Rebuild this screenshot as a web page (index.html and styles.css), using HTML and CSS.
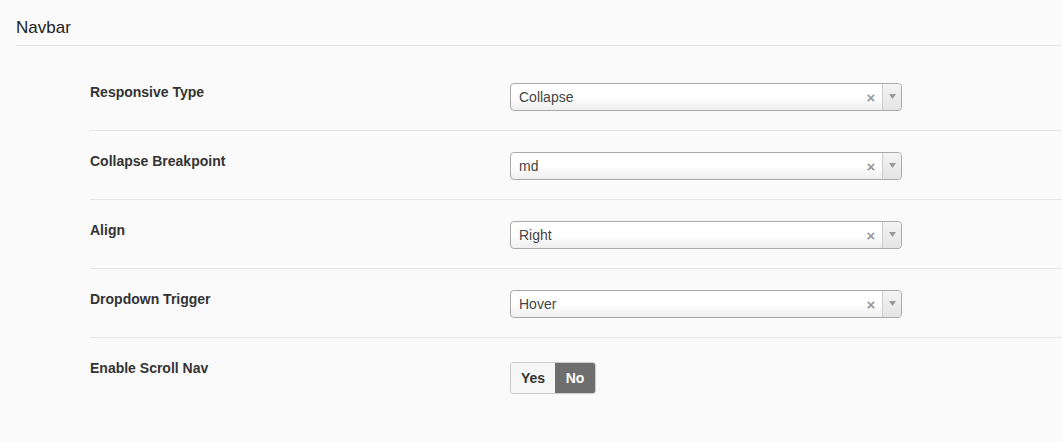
FILE: index.html
```html
<!DOCTYPE html>
<html>
<head>
<meta charset="utf-8">
<link rel="stylesheet" href="styles.css">
</head>
<body>
<div class="panel">
  <div class="panel-header">Navbar</div>
  <div class="panel-body">
    <div class="row">
      <div class="label">Responsive Type</div>
      <div class="select"><span class="value">Collapse</span><span class="clear">×</span><span class="arrow"><svg width="7" height="5" viewBox="0 0 7 5"><path d="M0 0h7L3.5 5z" fill="#999"/></svg></span></div>
    </div>
    <div class="row">
      <div class="label">Collapse Breakpoint</div>
      <div class="select"><span class="value">md</span><span class="clear">×</span><span class="arrow"><svg width="7" height="5" viewBox="0 0 7 5"><path d="M0 0h7L3.5 5z" fill="#999"/></svg></span></div>
    </div>
    <div class="row">
      <div class="label">Align</div>
      <div class="select"><span class="value">Right</span><span class="clear">×</span><span class="arrow"><svg width="7" height="5" viewBox="0 0 7 5"><path d="M0 0h7L3.5 5z" fill="#999"/></svg></span></div>
    </div>
    <div class="row">
      <div class="label">Dropdown Trigger</div>
      <div class="select"><span class="value">Hover</span><span class="clear">×</span><span class="arrow"><svg width="7" height="5" viewBox="0 0 7 5"><path d="M0 0h7L3.5 5z" fill="#999"/></svg></span></div>
    </div>
    <div class="row row-last">
      <div class="label">Enable Scroll Nav</div>
      <div class="toggle"><span class="opt opt-yes">Yes</span><span class="opt opt-no">No</span></div>
    </div>
  </div>
</div>
</body>
</html>
```
FILE: styles.css
```css
html, body {
  margin: 0;
  padding: 0;
  background: #fafafa;
  font-family: "Liberation Sans", Arial, sans-serif;
  color: #333;
}
.panel-header {
  margin-left: 16px;
  padding: 16px 0 5px;
  line-height: 24px;
  font-size: 17px;
  color: #222;
  border-bottom: 1px solid #e6e6e6;
}
.panel-body {
  padding-top: 16px;
  margin-left: 90px;
}
.row {
  display: flex;
  align-items: flex-start;
  padding: 20px 0 19px;
  border-bottom: 1px solid #e6e6e6;
}
.row-last {
  border-bottom: none;
  padding-top: 24px;
}
.label {
  width: 420px;
  flex: none;
  font-size: 14px;
  font-weight: bold;
  line-height: 20px;
  color: #333;
}
.row-last .label {
  margin-top: -4px;
}
.select {
  margin-top: 1px;
  width: 390px;
  height: 26px;
  border: 1px solid #aaa;
  border-radius: 4px;
  background: linear-gradient(to bottom, #ffffff 0%, #ffffff 50%, #eeeeee 100%);
  display: flex;
  align-items: center;
  font-size: 14px;
  line-height: 26px;
  color: #444;
}
.value {
  flex: 1;
  padding-left: 8px;
}
.clear {
  width: 14px;
  text-align: center;
  font-size: 15px;
  font-weight: bold;
  color: #999;
  margin-right: 4px;
  margin-top: 2px;
}
.arrow {
  width: 18px;
  height: 26px;
  border-left: 1px solid #ccc;
  border-radius: 0 4px 4px 0;
  background: linear-gradient(to bottom, #f4f4f4 0%, #e4e4e4 100%);
  display: flex;
  align-items: center;
  justify-content: center;
}
.arrow svg {
  display: block;
  margin-top: -2px;
}
.toggle {
  display: flex;
  height: 30px;
  border: 1px solid #ccc;
  border-radius: 3px;
  overflow: hidden;
}
.opt {
  font-size: 14px;
  font-weight: bold;
  line-height: 30px;
  text-align: center;
}
.opt-yes {
  width: 44px;
  background: #f6f6f6;
  color: #333;
}
.opt-no {
  width: 40px;
  background: #6e6e6e;
  color: #fff;
}
```
